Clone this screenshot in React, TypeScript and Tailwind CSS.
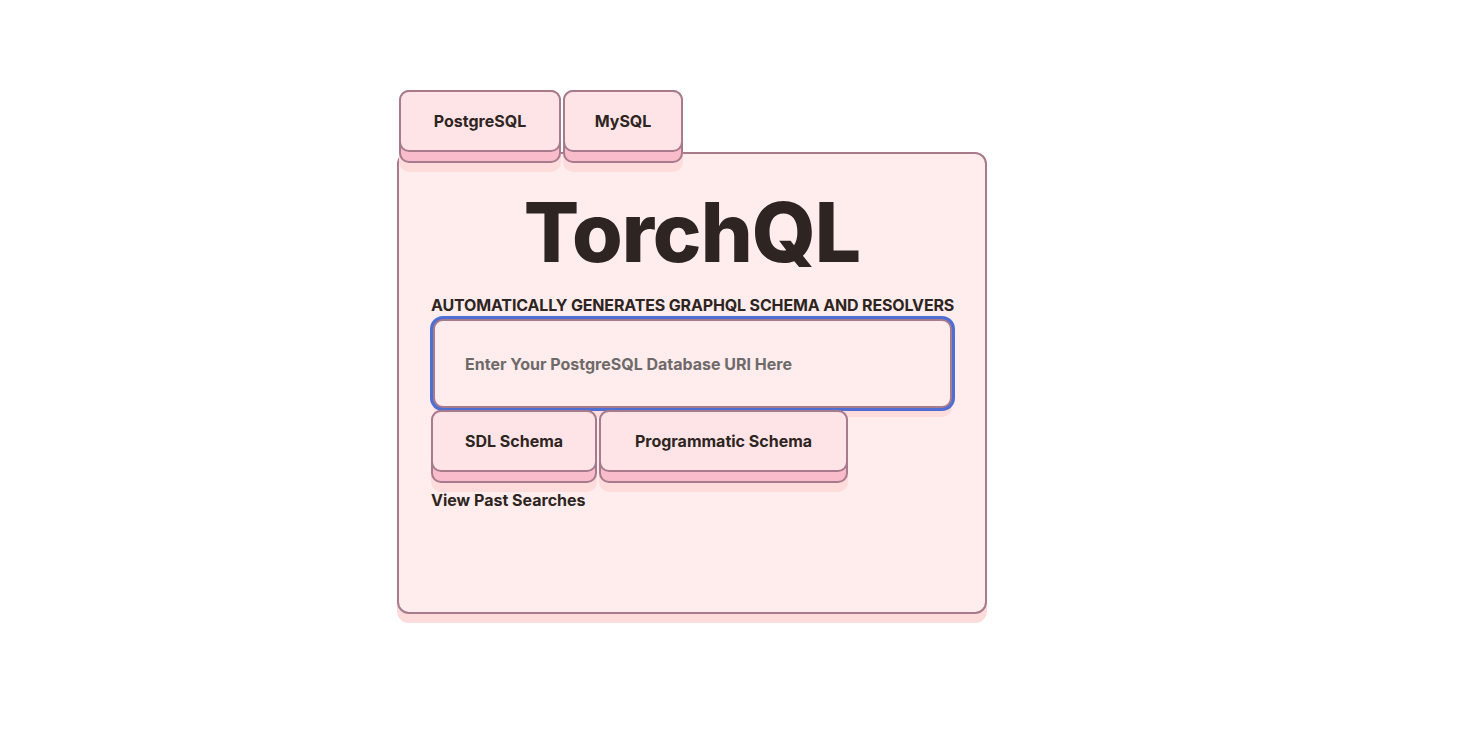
import React from 'react';

type PushProps = {
    label: string;
    width: string;
};

const Push = ({ label, width }: PushProps) => (
    <div className={`relative z-10 rounded-[10px] border-2 border-[#a77a8c] bg-[#f9bccb] shadow-[0_9px_0_#fedcdc] ${width}`}>
        <div className="-mx-[2px] -mt-[2px] mb-[9px] flex h-[62px] items-center justify-center rounded-[10px] border-2 border-[#a77a8c] bg-[#fee4e6] text-base font-bold text-[#2e2522]">
            {label}
        </div>
    </div>
);

export default function App() {
    return (
        <div
            className="min-h-screen bg-white pl-[397px] pt-[90px]"
            style={{ fontFamily: 'Inter, "Noto Sans", sans-serif' }}
        >
            <div className="flex gap-[2px] pl-[2px]">
                <Push label="PostgreSQL" width="w-[162px]" />
                <Push label="MySQL" width="w-[120px]" />
            </div>
            <div className="-mt-[11px] h-[462px] w-[590px] rounded-[12px] border-2 border-[#a77a8c] bg-[#ffeded] pl-[32px] pr-[32px] shadow-[0_9px_0_#fedcdc]">
                <h1 className="pt-[38px] text-center text-[82px] font-extrabold leading-none tracking-[-1px] text-[#2e2522]">
                    TorchQL
                </h1>
                <p className="mt-[21px] whitespace-nowrap text-base font-bold leading-5 tracking-[-0.15px] text-[#2e2522]">
                    AUTOMATICALLY GENERATES GRAPHQL SCHEMA AND RESOLVERS
                </p>
                <input
                    className="relative z-0 ml-[2px] mt-[4px] block h-[89px] w-[519px] rounded-[10px] border-2 border-[#a77a8c] bg-[#ffeded] pl-[30px] text-base font-bold text-[#2e2522] shadow-[0_0_0_3px_#4d6fd3,0_9px_0_#fedcdc] outline-none placeholder:text-[#6f6a6a]"
                    placeholder="Enter Your PostgreSQL Database URI Here"
                />
                <div className="mt-[2px] flex gap-[2px]">
                    <Push label="SDL Schema" width="w-[166px]" />
                    <Push label="Programmatic Schema" width="w-[249px]" />
                </div>
                <p className="mt-[5px] text-base font-bold text-[#2e2522]">View Past Searches</p>
            </div>
        </div>
    );
}
